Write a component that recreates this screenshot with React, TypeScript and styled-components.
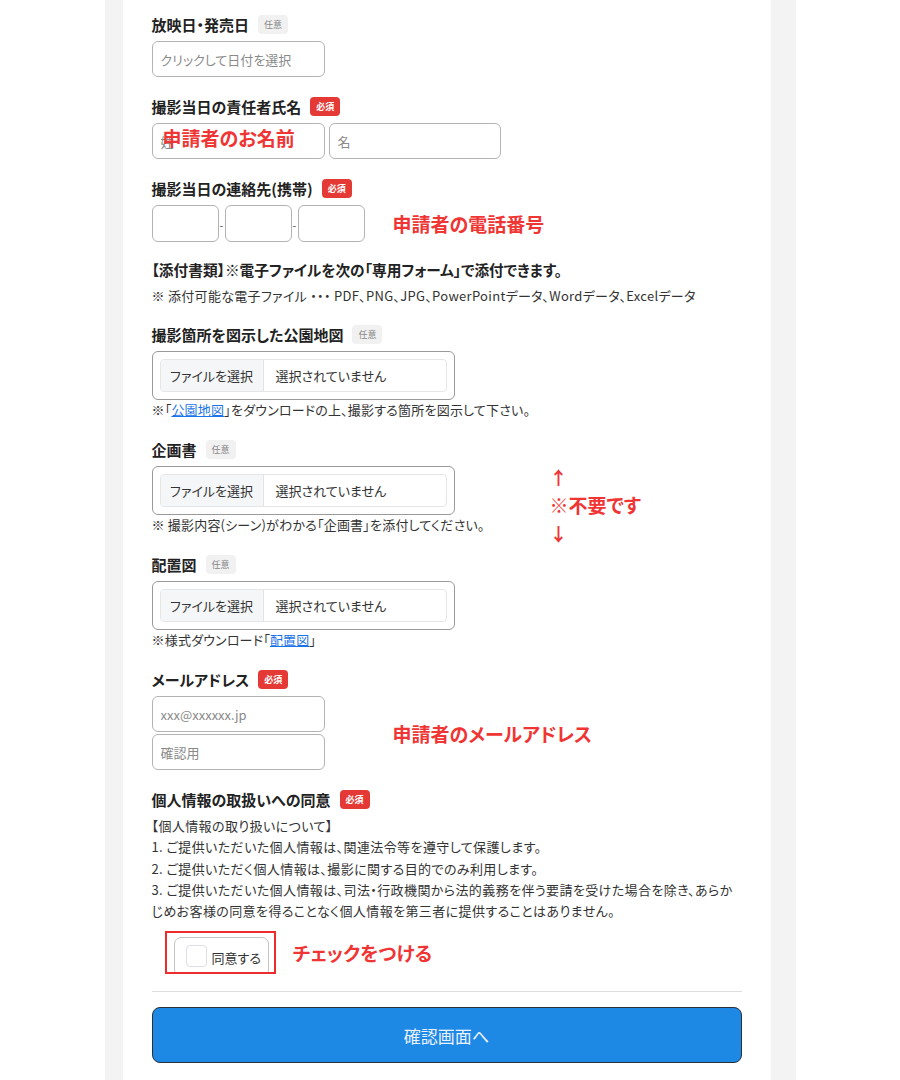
import React from 'react';
import styled, { createGlobalStyle } from 'styled-components';

const GlobalStyle = createGlobalStyle`
  html, body {
    margin: 0;
    padding: 0;
    background: #ffffff;
    font-family: "Noto Sans CJK JP", "Noto Sans", sans-serif;
    font-feature-settings: "palt";
    color: #333;
  }
  input, button {
    font-feature-settings: "palt";
  }
`;

const Column = styled.div`
  width: 691px;
  margin: 0 auto;
  background: #f3f3f3;
  min-height: 1080px;
`;

const Card = styled.form`
  width: 648px;
  margin-left: 18px;
  box-sizing: border-box;
  background: #fff;
  padding: 14px 29px 20px;
  min-height: 1080px;
`;

const Field = styled.div<{ $mb?: number }>`
  margin-bottom: ${p => p.$mb ?? 19}px;
`;

const Label = styled.div`
  display: flex;
  align-items: center;
  height: 20px;
  font-size: 15px;
  font-weight: 700;
  color: #222;
  margin-bottom: 7px;
`;

const Badge = styled.span<{ $required?: boolean }>`
  display: inline-flex;
  align-items: center;
  justify-content: center;
  margin-left: 9px;
  width: 30px;
  height: 19px;
  border-radius: 4px;
  font-size: 9px;
  font-weight: ${p => (p.$required ? 700 : 400)};
  background: ${p => (p.$required ? '#e53935' : '#f1f1f1')};
  color: ${p => (p.$required ? '#fff' : '#888')};
`;

const Input = styled.input<{ $w?: number; $h?: number }>`
  box-sizing: border-box;
  width: ${p => p.$w ?? 173}px;
  height: ${p => p.$h ?? 36}px;
  border: 1px solid #b3b3b3;
  border-radius: 6px;
  padding: 0 8px;
  font-family: inherit;
  font-size: 13px;
  color: #333;
  background: #fff;
  &::placeholder {
    color: #8a8a8a;
  }
`;

const Row = styled.div<{ $gap?: number }>`
  display: flex;
  align-items: center;
  gap: ${p => p.$gap ?? 4}px;
`;

const Stack = styled.div`
  display: flex;
  flex-direction: column;
  gap: 2px;
`;

const OverlayWrap = styled.div`
  position: relative;
`;

const Overlay = styled.span`
  position: absolute;
  left: 11px;
  top: 50%;
  transform: translateY(-64%);
  font-size: 19px;
  font-weight: 700;
  color: #f03535;
  pointer-events: none;
  white-space: nowrap;
`;

const Note = styled.div<{ $ml?: number }>`
  font-size: 19px;
  font-weight: 700;
  color: #f03535;
  margin-left: ${p => p.$ml ?? 28}px;
  white-space: nowrap;
`;

const Dash = styled.span`
  font-size: 11px;
  color: #555;
  width: 6px;
  text-align: center;
  align-self: flex-end;
  margin-bottom: 9px;
`;

const Heading = styled.div`
  font-size: 14.7px;
  font-weight: 700;
  color: #222;
  line-height: 20px;
  margin-top: -1px;
`;

const Body = styled.div`
  font-size: 13px;
  line-height: 20px;
  letter-spacing: 0.3px;
  color: #333;
  margin-top: 6px;
`;

const Hint = styled.div`
  font-size: 13px;
  line-height: 20px;
  letter-spacing: 0.2px;
  color: #333;
  a {
    color: #1a73e8;
    text-decoration: underline;
  }
`;

const FileWrap = styled.div<{ $w?: number }>`
  width: ${p => (p.$w ? `${p.$w}px` : 'auto')};
  flex-shrink: 0;
`;

const FileBox = styled.div`
  box-sizing: border-box;
  width: 303px;
  height: 49px;
  border: 1px solid #9a9a9a;
  border-radius: 6px;
  padding: 7px;
`;

const FileInner = styled.div`
  display: flex;
  align-items: center;
  height: 100%;
  border: 1px solid #e6e6e6;
  border-radius: 4px;
  box-sizing: border-box;
  overflow: hidden;
  font-size: 13px;
  color: #333;
`;

const FileButton = styled.span`
  display: flex;
  align-items: center;
  justify-content: center;
  width: 102px;
  height: 100%;
  background: #f5f6f8;
  border-right: 1px solid #e3e3e3;
`;

const FileName = styled.span`
  margin-left: 12px;
`;

const SideNote = styled.div`
  font-size: 19px;
  font-weight: 700;
  color: #f03535;
  line-height: 28px;
  display: flex;
  flex-direction: column;
  margin: -6px 0 -14px;
`;

const Arrow = styled.span`
  font-size: 18px;
`;

const Policy = styled.div`
  margin-top: -1px;
  font-size: 13px;
  line-height: 21.3px;
  letter-spacing: 0.4px;
  color: #333;
`;

const ConsentRow = styled.div`
  display: flex;
  align-items: center;
  margin: 10px 0 0 13px;
`;

const ConsentFrame = styled.div`
  width: 111px;
  height: 43px;
  box-sizing: border-box;
  border: 2px solid #ee2c2c;
  padding: 4px 5px 0 7px;
  overflow: hidden;
`;

const ConsentBox = styled.label`
  box-sizing: border-box;
  display: flex;
  align-items: center;
  height: 40px;
  border: 1px solid #c4c4c4;
  border-radius: 7px;
  padding-left: 11px;
  font-size: 13px;
  color: #333;
`;

const Check = styled.span`
  width: 19px;
  height: 20px;
  border: 1px solid #dcdfe4;
  border-radius: 4px;
  margin-right: 5px;
  margin-top: -3px;
  background: #fff;
`;

const Divider = styled.hr`
  border: none;
  border-top: 1px solid #dedede;
  margin: 17px 0 15px;
`;

const Submit = styled.button`
  width: 100%;
  height: 56px;
  background: #1e88e5;
  border: 1.5px solid #2b2f36;
  border-radius: 8px;
  color: #eaf2ff;
  font-family: inherit;
  font-size: 17px;
`;

const FileField: React.FC<{ hint: React.ReactNode; w?: number }> = ({ hint, w }) => (
  <FileWrap $w={w}>
    <FileBox>
      <FileInner>
        <FileButton>ファイルを選択</FileButton>
        <FileName>選択されていません</FileName>
      </FileInner>
    </FileBox>
    <Hint>{hint}</Hint>
  </FileWrap>
);

export default function App() {
  return (
    <>
      <GlobalStyle />
      <Column>
        <Card onSubmit={e => e.preventDefault()}>
          <Field>
            <Label>
              放映日・発売日<Badge>任意</Badge>
            </Label>
            <Input placeholder="クリックして日付を選択" />
          </Field>

          <Field>
            <Label>
              撮影当日の責任者氏名<Badge $required>必須</Badge>
            </Label>
            <Row>
              <OverlayWrap>
                <Input placeholder="姓" />
                <Overlay>申請者のお名前</Overlay>
              </OverlayWrap>
              <Input placeholder="名" $w={172} />
            </Row>
          </Field>

          <Field>
            <Label>
              撮影当日の連絡先(携帯)<Badge $required>必須</Badge>
            </Label>
            <Row $gap={0}>
              <Input $w={67} $h={37} />
              <Dash>-</Dash>
              <Input $w={67} $h={37} />
              <Dash>-</Dash>
              <Input $w={67} $h={37} />
              <Note>申請者の電話番号</Note>
            </Row>
          </Field>

          <Field $mb={18}>
            <Heading>【添付書類】※電子ファイルを次の「専用フォーム」で添付できます。</Heading>
            <Body>
              ※ 添付可能な電子ファイル ・・・ PDF、PNG、JPG、PowerPointデータ、Wordデータ、Excelデータ
            </Body>
          </Field>

          <Field>
            <Label>
              撮影箇所を図示した公園地図<Badge>任意</Badge>
            </Label>
            <FileField
              hint={
                <>
                  ※「<a href="#">公園地図</a>」をダウンロードの上、撮影する箇所を図示して下さい。
                </>
              }
            />
          </Field>

          <Field>
            <Label>
              企画書<Badge>任意</Badge>
            </Label>
            <Row $gap={0}>
              <FileField w={398} hint="※ 撮影内容(シーン)がわかる「企画書」を添付してください。" />
              <SideNote>
                <Arrow>↑</Arrow>
                <span>※不要です</span>
                <Arrow>↓</Arrow>
              </SideNote>
            </Row>
          </Field>

          <Field>
            <Label>
              配置図<Badge>任意</Badge>
            </Label>
            <FileField
              hint={
                <>
                  ※様式ダウンロード「<a href="#">配置図</a>」
                </>
              }
            />
          </Field>

          <Field>
            <Label>
              メールアドレス<Badge $required>必須</Badge>
            </Label>
            <Row $gap={0}>
              <Stack>
                <Input placeholder="xxx@xxxxxx.jp" />
                <Input placeholder="確認用" />
              </Stack>
              <Note $ml={68}>申請者のメールアドレス</Note>
            </Row>
          </Field>

          <div>
            <Label>
              個人情報の取扱いへの同意<Badge $required>必須</Badge>
            </Label>
            <Policy>
              【個人情報の取り扱いについて】
              <br />
              1. ご提供いただいた個人情報は、関連法令等を遵守して保護します。
              <br />
              2. ご提供いただく個人情報は、撮影に関する目的でのみ利用します。
              <br />
              3. ご提供いただいた個人情報は、司法・行政機関から法的義務を伴う要請を受けた場合を除き、あらかじめお客様の同意を得ることなく個人情報を第三者に提供することはありません。
            </Policy>
            <ConsentRow>
              <ConsentFrame>
                <ConsentBox>
                  <Check />
                  同意する
                </ConsentBox>
              </ConsentFrame>
              <Note $ml={17}>チェックをつける</Note>
            </ConsentRow>
          </div>

          <Divider />
          <Submit type="submit">確認画面へ</Submit>
        </Card>
      </Column>
    </>
  );
}
